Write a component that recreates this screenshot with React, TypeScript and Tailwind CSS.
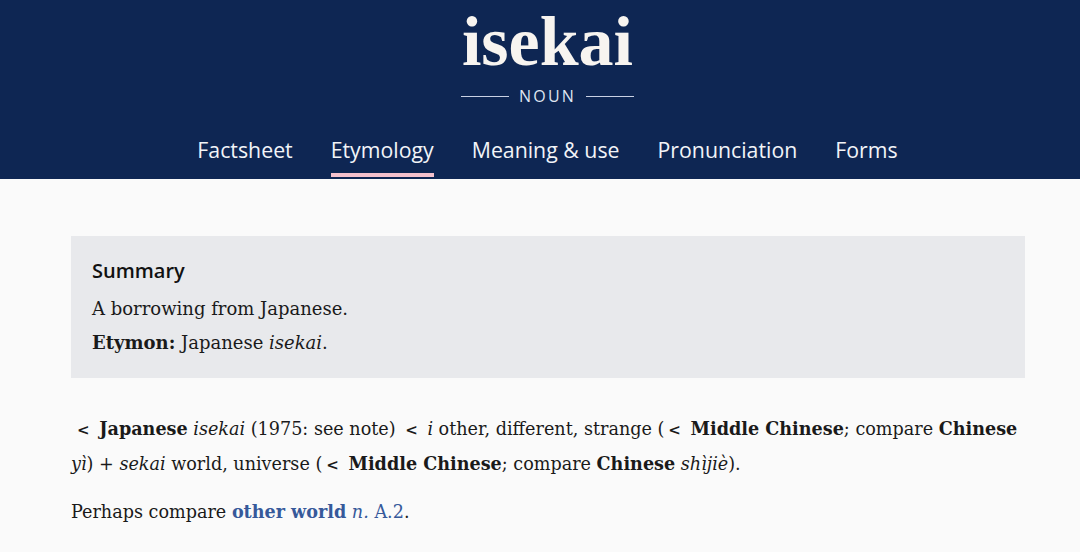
export default function App() {
  const serif = { fontFamily: "'DejaVu Serif', serif" };
  const lt = <span className="font-bold text-[15px] mx-[4px]">&lt;</span>;

  return (
    <div className="w-[1080px] h-[552px] overflow-hidden bg-[#fafafa] text-[#1a1a1a]">
      {/* Header */}
      <header className="h-[179px] bg-[#0e2653] text-white flex flex-col items-center pl-[15px]">
        <h1 className="mt-[2px] text-[70px] leading-[80px] font-bold text-[#f7f4f0]" style={{ fontFamily: "'Liberation Serif', serif" }}>
          isekai
        </h1>
        <div className="flex items-center gap-[10px] mt-[2px]">
          <span className="w-[48px] h-px bg-[#c9d1e4]"></span>
          <span className="text-[16px] tracking-[0.14em] text-[#dfe5f1]" style={{ fontFamily: "'Open Sans', sans-serif" }}>NOUN</span>
          <span className="w-[48px] h-px bg-[#c9d1e4]"></span>
        </div>
        <nav className="mt-[26px] flex gap-[38px] text-[21.3px] text-[#f2f4f8]" style={{ fontFamily: "'Open Sans', sans-serif" }}>
          <a className="pb-[7px]">Factsheet</a>
          <a className="pb-[7px] border-b-4 border-[#f4c1cd]">Etymology</a>
          <a className="pb-[7px]">Meaning &amp; use</a>
          <a className="pb-[7px]">Pronunciation</a>
          <a className="pb-[7px]">Forms</a>
        </nav>
      </header>

      {/* Content */}
      <main className="ml-[71px] w-[954px] pt-[57px]" style={serif}>
        <section className="bg-[#e8e9ec] px-[21px] pt-[20px] pb-[18px]">
          <h2 className="text-[20px] font-semibold leading-[30px] text-[#111]" style={{ fontFamily: "'Open Sans', sans-serif" }}>Summary</h2>
          <p className="text-[18px] leading-[34px] mt-[6px]">A borrowing from Japanese.</p>
          <p className="text-[18px] leading-[34px]">
            <b>Etymon:</b> Japanese <i>isekai</i>.
          </p>
        </section>

        <div className="mt-[34px] text-[17.6px] leading-[34px]">
          <p className="whitespace-nowrap pl-[2px]">
            {lt} <b>Japanese</b> <i>isekai</i> (1975: see note) {lt} <i>i</i> other, different, strange ({lt} <b>Middle Chinese</b>; compare <b>Chinese</b>
          </p>
          <p className="whitespace-nowrap">
            <i>yì</i>) + <i>sekai</i> world, universe ({lt} <b>Middle Chinese</b>; compare <b>Chinese</b> <i>shìjiè</i>).
          </p>
        </div>
        <p className="mt-[13px] text-[17.6px] leading-[34px]">
          Perhaps compare <a className="font-bold text-[#36599a]">other world</a> <span className="text-[#36599a]"><i>n.</i> A.2</span>.
        </p>
      </main>
    </div>
  );
}
